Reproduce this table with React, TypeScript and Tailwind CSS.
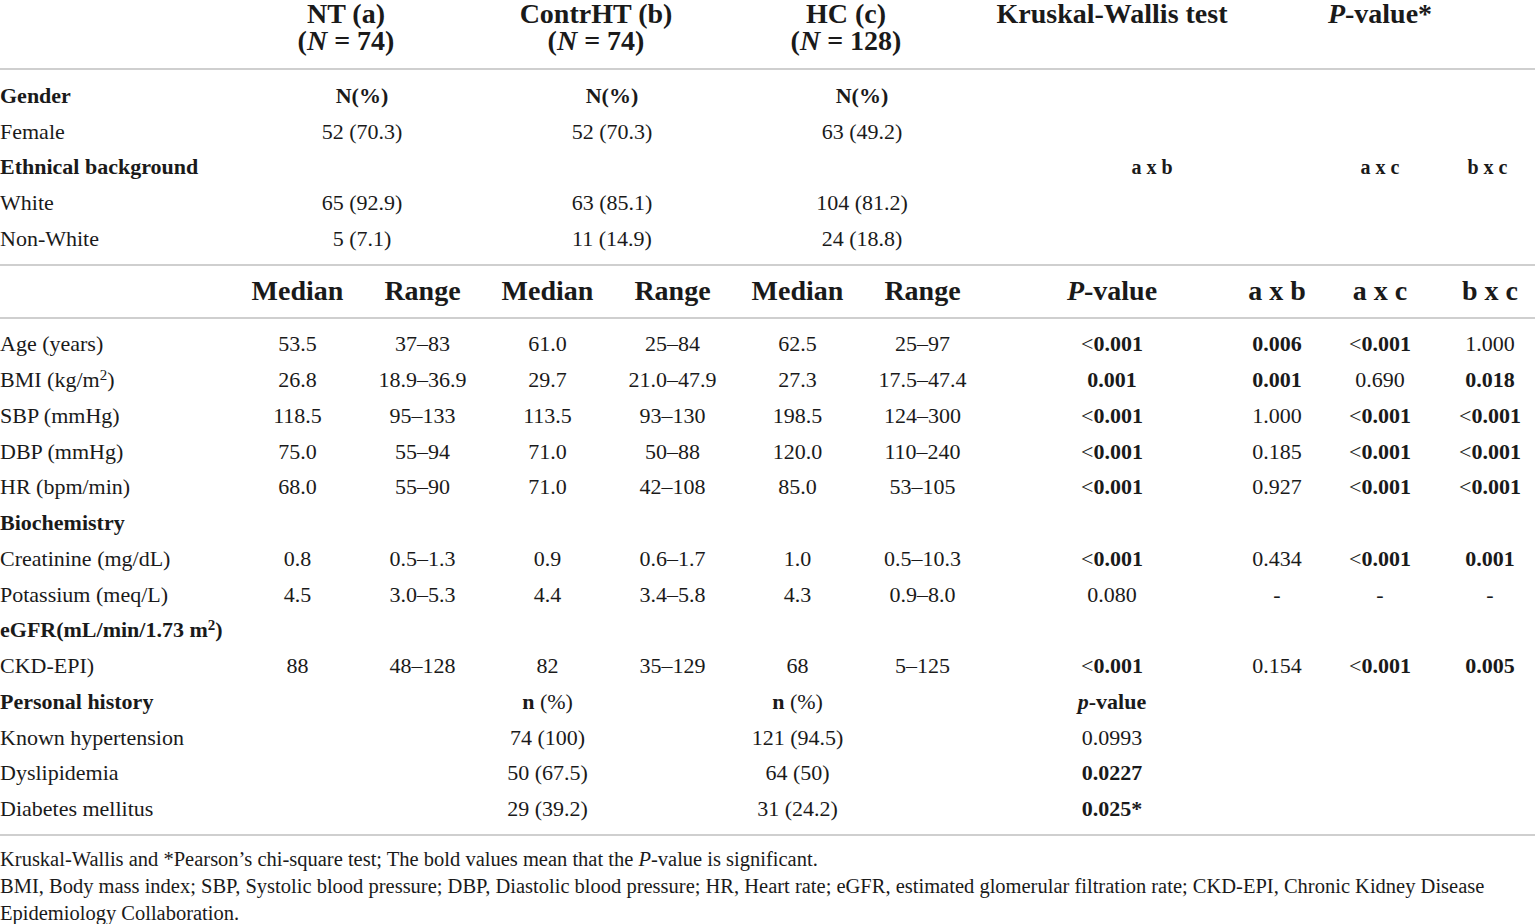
import React from 'react';

const topCols = 'grid grid-cols-[237px_250px_250px_250px_250px_1fr]';
const botCols = 'grid grid-cols-[235px_125px_125px_125px_125px_125px_125px_254px_76px_130px_1fr]';

// "<*0.001" -> "<" + bold, "*0.006" -> bold, anything else plain
function PV({ v }: { v: string }) {
  if (v.startsWith('<*')) {
    return (
      <>
        &lt;<span className="font-bold">{v.slice(2)}</span>
      </>
    );
  }
  if (v.startsWith('*')) return <span className="font-bold">{v.slice(1)}</span>;
  return <>{v}</>;
}

type Row = {
  label: React.ReactNode;
  bold?: boolean;
  vals?: string[];
};

const measures: Row[] = [
  { label: 'Age (years)', vals: ['53.5', '37–83', '61.0', '25–84', '62.5', '25–97', '<*0.001', '*0.006', '<*0.001', '1.000'] },
  {
    label: (
      <>
        BMI (kg/m<sup className="text-[15px]">2</sup>)
      </>
    ),
    vals: ['26.8', '18.9–36.9', '29.7', '21.0–47.9', '27.3', '17.5–47.4', '*0.001', '*0.001', '0.690', '*0.018'],
  },
  { label: 'SBP (mmHg)', vals: ['118.5', '95–133', '113.5', '93–130', '198.5', '124–300', '<*0.001', '1.000', '<*0.001', '<*0.001'] },
  { label: 'DBP (mmHg)', vals: ['75.0', '55–94', '71.0', '50–88', '120.0', '110–240', '<*0.001', '0.185', '<*0.001', '<*0.001'] },
  { label: 'HR (bpm/min)', vals: ['68.0', '55–90', '71.0', '42–108', '85.0', '53–105', '<*0.001', '0.927', '<*0.001', '<*0.001'] },
  { label: 'Biochemistry', bold: true },
  { label: 'Creatinine (mg/dL)', vals: ['0.8', '0.5–1.3', '0.9', '0.6–1.7', '1.0', '0.5–10.3', '<*0.001', '0.434', '<*0.001', '*0.001'] },
  { label: 'Potassium (meq/L)', vals: ['4.5', '3.0–5.3', '4.4', '3.4–5.8', '4.3', '0.9–8.0', '0.080', '-', '-', '-'] },
  {
    label: (
      <>
        eGFR(mL/min/1.73 m<sup className="text-[15px]">2</sup>)
      </>
    ),
    bold: true,
  },
  { label: 'CKD-EPI)', vals: ['88', '48–128', '82', '35–129', '68', '5–125', '<*0.001', '0.154', '<*0.001', '*0.005'] },
];

const history = [
  { label: 'Known hypertension', b: '74 (100)', c: '121 (94.5)', p: '0.0993' },
  { label: 'Dyslipidemia', b: '50 (67.5)', c: '64 (50)', p: '*0.0227' },
  { label: 'Diabetes mellitus', b: '29 (39.2)', c: '31 (24.2)', p: '*0.025*' },
];

const ethnic = [
  { label: 'White', a: '65 (92.9)', b: '63 (85.1)', c: '104 (81.2)' },
  { label: 'Non-White', a: '5 (7.1)', b: '11 (14.9)', c: '24 (18.8)' },
];

function GroupHead({ name, n }: { name: string; n: string }) {
  return (
    <div className="text-center pr-8 font-bold">
      <div>{name}</div>
      <div>
        (<span className="italic">N</span> = {n})
      </div>
    </div>
  );
}

export default function App() {
  return (
    <div className="w-[1535px] h-[924px] overflow-hidden bg-white text-[#1a1a1a] font-['Liberation_Serif',serif]">
      {/* group header */}
      <div className={`${topCols} text-[28px] leading-[27px] h-[68px]`}>
        <div />
        <GroupHead name="NT (a)" n="74" />
        <GroupHead name="ContrHT (b)" n="74" />
        <GroupHead name="HC (c)" n="128" />
        <div className="text-center font-bold whitespace-nowrap">Kruskal-Wallis test</div>
        <div className="text-center font-bold pr-3">
          <span className="italic">P</span>-value*
        </div>
      </div>
      <div className="h-[2px] bg-[#cfcfcf]" />

      {/* categorical block */}
      <div className="pt-[8px] pb-[8px] text-[22px]">
        <div className={`${topCols} h-[35.6px] items-center`}>
          <div className="font-bold">Gender</div>
          <div className="text-center font-bold">N(%)</div>
          <div className="text-center font-bold">N(%)</div>
          <div className="text-center font-bold">N(%)</div>
        </div>
        <div className={`${topCols} h-[35.6px] items-center`}>
          <div>Female</div>
          <div className="text-center">52 (70.3)</div>
          <div className="text-center">52 (70.3)</div>
          <div className="text-center">63 (49.2)</div>
        </div>
        <div className={`${topCols} h-[35.6px] items-center`}>
          <div className="font-bold whitespace-nowrap">Ethnical background</div>
          <div />
          <div />
          <div />
          <div className="text-center font-bold pl-[80px] text-[20px]">a x b</div>
          <div className="grid grid-cols-[83px_120px_1fr] font-bold text-[20px]">
            <div />
            <div className="text-center">a x c</div>
            <div className="text-center">b x c</div>
          </div>
        </div>
        {ethnic.map((r) => (
          <div key={r.label} className={`${topCols} h-[35.6px] items-center`}>
            <div>{r.label}</div>
            <div className="text-center">{r.a}</div>
            <div className="text-center">{r.b}</div>
            <div className="text-center">{r.c}</div>
          </div>
        ))}
      </div>
      <div className="h-[2px] bg-[#cfcfcf]" />

      {/* continuous block header */}
      <div className={`${botCols} h-[51px] items-center text-[28px] font-bold`}>
        <div />
        {['Median', 'Range', 'Median', 'Range', 'Median', 'Range'].map((h, i) => (
          <div key={i} className="text-center">
            {h}
          </div>
        ))}
        <div className="text-center">
          <span className="italic">P</span>-value
        </div>
        <div className="text-center">a x b</div>
        <div className="text-center">a x c</div>
        <div className="text-center">b x c</div>
      </div>
      <div className="h-[2px] bg-[#cfcfcf]" />

      <div className="pt-[7px] pb-[8px] text-[22px]">
        {measures.map((r, i) => (
          <div key={i} className={`${botCols} h-[35.75px] items-center`}>
            <div className={r.bold ? 'font-bold whitespace-nowrap' : 'whitespace-nowrap'}>{r.label}</div>
            {r.vals?.map((v, j) => (
              <div key={j} className="text-center whitespace-nowrap">
                <PV v={v} />
              </div>
            ))}
          </div>
        ))}
        <div className={`${botCols} h-[35.75px] items-center`}>
          <div className="font-bold">Personal history</div>
          <div />
          <div />
          <div className="text-center">
            <span className="font-bold">n</span> (%)
          </div>
          <div />
          <div className="text-center">
            <span className="font-bold">n</span> (%)
          </div>
          <div />
          <div className="text-center font-bold">
            <span className="italic">p</span>-value
          </div>
        </div>
        {history.map((r) => (
          <div key={r.label} className={`${botCols} h-[35.75px] items-center`}>
            <div>{r.label}</div>
            <div />
            <div />
            <div className="text-center">{r.b}</div>
            <div />
            <div className="text-center">{r.c}</div>
            <div />
            <div className="text-center">
              <PV v={r.p} />
            </div>
          </div>
        ))}
      </div>
      <div className="h-[2px] bg-[#cfcfcf]" />

      {/* footnotes */}
      <div className="pt-[10px] text-[20.5px] leading-[27px]">
        <p>
          Kruskal-Wallis and *Pearson’s chi-square test; The bold values mean that the{' '}
          <span className="italic">P</span>-value is significant.
        </p>
        <p>
          BMI, Body mass index; SBP, Systolic blood pressure; DBP, Diastolic blood pressure; HR, Heart rate; eGFR,
          estimated glomerular filtration rate; CKD-EPI, Chronic Kidney Disease Epidemiology Collaboration.
        </p>
      </div>
    </div>
  );
}
